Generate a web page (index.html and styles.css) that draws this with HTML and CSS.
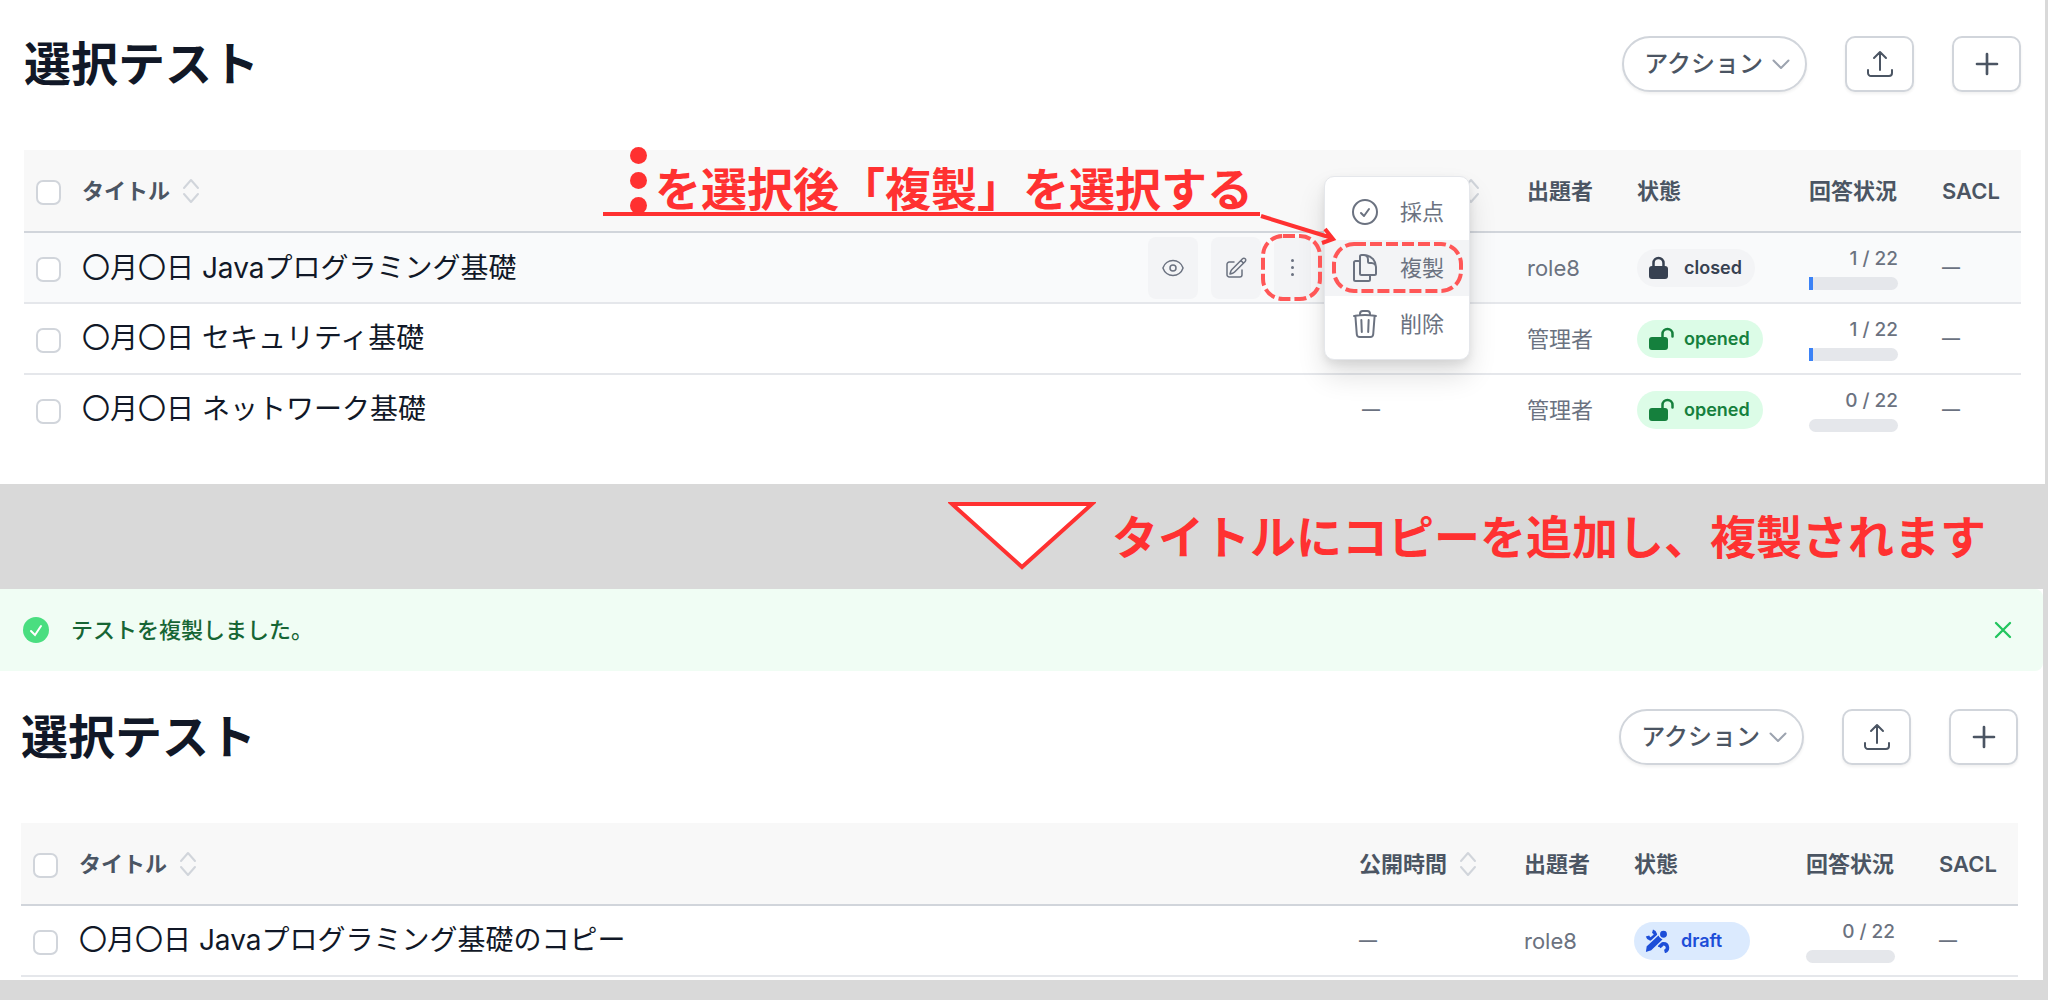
FILE: index.html
```html
<!DOCTYPE html>
<html lang="ja">
<head>
<meta charset="utf-8">
<title>選択テスト</title>
<link rel="stylesheet" href="styles.css">
</head>
<body>
<svg class="sprite" aria-hidden="true">
  <symbol id="chevron" viewBox="0 0 20 20"><path d="M2.500 6.500l7.500 7.500 7.500-7.500"/></symbol>
  <symbol id="upload" viewBox="0 0 24 24"><path d="M3 16.500v2.250A2.250 2.250 0 0 0 5.250 21h13.500A2.250 2.250 0 0 0 21 18.750V16.500m-13.500-9L12 3m0 0 4.500 4.500M12 3v13.500"/></symbol>
  <symbol id="plus" viewBox="0 0 24 24"><path d="M12 4.500v15m7.500-7.500h-15"/></symbol>
  <symbol id="sort" viewBox="0 0 18 26"><path d="M2 10l7-8 7 8M2 16l7 8 7-8"/></symbol>
  <symbol id="eye" viewBox="0 0 24 24"><path d="M2.036 12.322a1.012 1.012 0 0 1 0-.639C3.423 7.510 7.360 4.500 12 4.500c4.638 0 8.573 3.007 9.963 7.178.070.207.070.431 0 .639C20.577 16.490 16.640 19.500 12 19.500c-4.638 0-8.573-3.007-9.963-7.178Z"/><circle cx="12" cy="12" r="3"/></symbol>
  <symbol id="edit" viewBox="0 0 24 24"><path d="m16.862 4.487 1.687-1.688a1.875 1.875 0 1 1 2.652 2.652L10.582 16.070a4.500 4.500 0 0 1-1.897 1.130L6 18l.8-2.685a4.500 4.500 0 0 1 1.130-1.897l8.932-8.931Zm0 0L19.500 7.125M18 14v4.750A2.250 2.250 0 0 1 15.750 21H5.250A2.250 2.250 0 0 1 3 18.750V8.250A2.250 2.250 0 0 1 5.250 6H10"/></symbol>
  <symbol id="check-circle" viewBox="0 0 24 24"><path d="M9 12.750 11.250 15 15 9.750M21 12a9 9 0 1 1-18 0 9 9 0 0 1 18 0Z"/></symbol>
  <symbol id="copy" viewBox="0 0 24 24"><path d="M15.750 17.250v3.375c0 .621-.504 1.125-1.125 1.125h-9.750a1.125 1.125 0 0 1-1.125-1.125V7.875c0-.621.504-1.125 1.125-1.125H6.750a9.060 9.060 0 0 1 1.500.124m7.500 10.376h3.375c.621 0 1.125-.504 1.125-1.125V11.250c0-4.460-3.243-8.161-7.500-8.876a9.060 9.060 0 0 0-1.500-.124H9.375c-.621 0-1.125.504-1.125 1.125v3.500m7.500 10.375H9.375a1.125 1.125 0 0 1-1.125-1.125v-9.250m12 6.625v-1.875a3.375 3.375 0 0 0-3.375-3.375h-1.500a1.125 1.125 0 0 1-1.125-1.125v-1.500a3.375 3.375 0 0 0-3.375-3.375H9.750"/></symbol>
  <symbol id="trash" viewBox="0 0 24 24"><path d="m14.740 9-.346 9m-4.788 0L9.260 9m9.968-3.210c.342.052.682.107 1.022.166m-1.022-.165L18.160 19.673a2.250 2.250 0 0 1-2.244 2.077H8.084a2.250 2.250 0 0 1-2.244-2.077L4.772 5.790m14.456 0a48.108 48.108 0 0 0-3.478-.397m-12 .562c.340-.059.680-.114 1.022-.165m0 0a48.110 48.110 0 0 1 3.478-.397m7.500 0v-.916c0-1.180-.910-2.164-2.090-2.201a51.964 51.964 0 0 0-3.320 0c-1.180.037-2.090 1.022-2.090 2.201v.916m7.500 0a48.667 48.667 0 0 0-7.500 0"/></symbol>
  <symbol id="lock" viewBox="0 0 26 24"><rect x="1" y="10" width="19" height="13" rx="3" fill="currentColor" stroke="none"/><path d="M5.500 12V7a5 5 0 0 1 10 0v5"/></symbol>
  <symbol id="unlock" viewBox="0 0 26 24"><rect x="1" y="10" width="19" height="13" rx="3" fill="currentColor" stroke="none"/><path d="M14.500 12V7a5 5 0 0 1 10 0v2.500"/></symbol>
  <symbol id="tools" viewBox="0 0 26 24"><g fill="none" stroke-linecap="butt"><path d="M7 7L17 18" stroke-width="4"/><path d="M7.500 2.200A4 4 0 1 1 2.500 7M14.500 18a4 4 0 1 1 5 4.500" stroke-width="3.500"/></g><g stroke="#dbeafe" stroke-width="1.500" fill="currentColor"><path d="M0 24l1-7L13.500 5.500l5 5L6.500 22Z"/><circle cx="18.500" cy="5.200" r="4.200"/></g></symbol>
  <symbol id="close" viewBox="0 0 24 24"><path d="M6 18 18 6M6 6l12 12"/></symbol>
</svg>

<section class="panel panel-before">
  <header class="page-head">
    <h1>選択テスト</h1>
    <div class="tools">
      <button class="btn btn-pill" type="button">アクション<svg class="icon chevron"><use href="#chevron"/></svg></button>
      <button class="btn btn-icon" type="button" aria-label="アップロード"><svg class="icon icon-lg"><use href="#upload"/></svg></button>
      <button class="btn btn-icon" type="button" aria-label="追加"><svg class="icon icon-lg bold"><use href="#plus"/></svg></button>
    </div>
  </header>

  <table class="tests">
    <colgroup><col class="c-check"><col><col class="c-time"><col class="c-author"><col class="c-state"><col class="c-answers"><col class="c-sacl"></colgroup>
    <thead>
      <tr>
        <th><input type="checkbox" aria-label="すべて選択"></th>
        <th><span class="sortable">タイトル<svg class="icon sort"><use href="#sort"/></svg></span></th>
        <th><span class="sortable"><span class="covered">公開時間</span><svg class="icon sort"><use href="#sort"/></svg></span></th>
        <th>出題者</th>
        <th>状態</th>
        <th>回答状況</th>
        <th>SACL</th>
      </tr>
    </thead>
    <tbody>
      <tr class="hovered">
        <td><input type="checkbox" aria-label="Javaプログラミング基礎を選択"></td>
        <td>
          <div class="title-cell">
            <a class="title" href="#">〇月〇日 Javaプログラミング基礎</a>
            <div class="actions">
              <button class="action" type="button" aria-label="表示"><svg class="icon"><use href="#eye"/></svg></button>
              <button class="action" type="button" aria-label="編集"><svg class="icon"><use href="#edit"/></svg></button>
              <button class="action action-more" type="button" aria-label="その他"><i></i><i></i><i></i></button>
              <div class="menu">
                <button type="button"><svg class="icon icon-lg"><use href="#check-circle"/></svg>採点</button>
                <button class="active" type="button"><svg class="icon icon-lg"><use href="#copy"/></svg>複製</button>
                <button type="button"><svg class="icon icon-lg"><use href="#trash"/></svg>削除</button>
              </div>
              <svg class="marks" viewBox="0 0 210 90" aria-hidden="true">
                <rect x="8" y="25" width="57" height="63" rx="20"/>
                <rect x="79" y="33" width="127" height="47" rx="20"/>
                <path d="M6 5L77 27M70 18L78 28L67 32"/>
              </svg>
            </div>
          </div>
        </td>
        <td></td>
        <td>role8</td>
        <td><span class="badge closed"><svg class="icon"><use href="#lock"/></svg>closed</span></td>
        <td><div class="answers">1 / 22<span class="bar"><span style="width:4%"></span></span></div></td>
        <td class="none">—</td>
      </tr>
      <tr>
        <td><input type="checkbox" aria-label="セキュリティ基礎を選択"></td>
        <td><a class="title" href="#">〇月〇日 セキュリティ基礎</a></td>
        <td></td>
        <td>管理者</td>
        <td><span class="badge opened"><svg class="icon"><use href="#unlock"/></svg>opened</span></td>
        <td><div class="answers">1 / 22<span class="bar"><span style="width:4%"></span></span></div></td>
        <td class="none">—</td>
      </tr>
      <tr>
        <td><input type="checkbox" aria-label="ネットワーク基礎を選択"></td>
        <td><a class="title" href="#">〇月〇日 ネットワーク基礎</a></td>
        <td class="none">—</td>
        <td>管理者</td>
        <td><span class="badge opened"><svg class="icon"><use href="#unlock"/></svg>opened</span></td>
        <td><div class="answers">0 / 22<span class="bar"></span></div></td>
        <td class="none">—</td>
      </tr>
    </tbody>
  </table>

  <p class="callout"><span class="dots"><i></i><i></i><i></i></span>を選択後「複製」を選択する</p>
</section>

<div class="step">
  <svg class="triangle" viewBox="0 0 148 70" aria-hidden="true"><path d="M4 2H144L74 65Z"/></svg>
  <p>タイトルにコピーを追加し、複製されます</p>
</div>

<section class="panel panel-after">
  <div class="alert" role="status">
    <svg class="done" viewBox="0 0 26 26" aria-hidden="true"><circle cx="13" cy="13" r="13"/><path d="M8 14l4 4 6-9"/></svg>
    <p>テストを複製しました。</p>
    <button type="button" aria-label="閉じる"><svg class="icon"><use href="#close"/></svg></button>
  </div>
  <header class="page-head">
    <h1>選択テスト</h1>
    <div class="tools">
      <button class="btn btn-pill" type="button">アクション<svg class="icon chevron"><use href="#chevron"/></svg></button>
      <button class="btn btn-icon" type="button" aria-label="アップロード"><svg class="icon icon-lg"><use href="#upload"/></svg></button>
      <button class="btn btn-icon" type="button" aria-label="追加"><svg class="icon icon-lg bold"><use href="#plus"/></svg></button>
    </div>
  </header>
  <table class="tests">
    <colgroup><col class="c-check"><col><col class="c-time"><col class="c-author"><col class="c-state"><col class="c-answers"><col class="c-sacl"></colgroup>
    <thead>
      <tr>
        <th><input type="checkbox" aria-label="すべて選択"></th>
        <th><span class="sortable">タイトル<svg class="icon sort"><use href="#sort"/></svg></span></th>
        <th><span class="sortable">公開時間<svg class="icon sort"><use href="#sort"/></svg></span></th>
        <th>出題者</th>
        <th>状態</th>
        <th>回答状況</th>
        <th>SACL</th>
      </tr>
    </thead>
    <tbody>
      <tr>
        <td><input type="checkbox" aria-label="Javaプログラミング基礎のコピーを選択"></td>
        <td><a class="title" href="#">〇月〇日 Javaプログラミング基礎のコピー</a></td>
        <td class="none">—</td>
        <td>role8</td>
        <td><span class="badge draft"><svg class="icon"><use href="#tools"/></svg>draft</span></td>
        <td><div class="answers">0 / 22<span class="bar"></span></div></td>
        <td class="none">—</td>
      </tr>
    </tbody>
  </table>
</section>
</body>
</html>
```
FILE: styles.css
```css
* { box-sizing: border-box; }

body {
  margin: 0;
  background: #d9d9d9;
  color: #6b7280;
  font-family: Inter, "Noto Sans CJK JP", sans-serif;
  font-size: 22px;
  line-height: 32px;
}

h1, p { margin: 0; }
button { font: inherit; color: inherit; cursor: pointer; }
.sprite { display: none; }

.icon {
  flex: none;
  width: 24px;
  height: 24px;
  fill: none;
  stroke: currentColor;
  stroke-width: 1.5;
  stroke-linecap: round;
  stroke-linejoin: round;
}
.icon-lg { width: 32px; height: 32px; }
.bold { stroke-width: 2; }

.panel { position: relative; background: #fff; }
.panel-before { margin-right: 3px; padding: 36px 24px 38px; }
.panel-after { margin-right: 5px; padding-bottom: 3px; }
.panel-after .page-head { padding: 38px 25px 0 21px; }
.panel-after .tests { width: calc(100% - 46px); margin-left: 21px; }

.page-head {
  display: flex;
  align-items: center;
  justify-content: space-between;
  margin-bottom: 58px;
}
h1 { color: #111827; font-size: 47px; line-height: 56px; font-weight: 700; }
.tools { display: flex; gap: 38px; }
.btn {
  display: flex;
  align-items: center;
  justify-content: center;
  height: 56px;
  padding: 0;
  border: 2px solid #d1d5db;
  border-radius: 10px;
  background: #fff;
  color: #4b5563;
  box-shadow: 0 2px 3px rgba(0, 0, 0, 0.06);
}
.btn-icon { width: 69px; }
.btn-pill { gap: 8px; padding: 0 14px 0 20px; border-radius: 28px; font-size: 24px; font-weight: 500; }
.chevron { width: 20px; height: 20px; color: #9ca3af; stroke-width: 2; }

.tests { width: 100%; table-layout: fixed; border-collapse: separate; border-spacing: 0; }
.c-check { width: 58px; }
.c-time { width: 165px; }
.c-author { width: 110px; }
.c-state { width: 172px; }
.c-answers { width: 133px; }
.c-sacl { width: 79px; }
th {
  height: 83px;
  padding: 0;
  border-bottom: 2px solid #d1d5db;
  background: #f8f8f8;
  color: #4b5563;
  font-weight: 700;
  text-align: left;
  white-space: nowrap;
}
th:last-child { font-weight: 600; }
td { height: 71px; padding: 0; border-bottom: 2px solid #e5e7eb; white-space: nowrap; }
.panel-before tr:last-child td { border-bottom-color: transparent; }
.hovered td { background: #f9fafb; }
.none { font-size: 18px; font-weight: 500; }
.sortable { display: flex; align-items: center; gap: 12px; }
.sort { width: 18px; height: 26px; color: #d1d5db; stroke-width: 2; }
.covered { visibility: hidden; }

input[type="checkbox"] {
  display: block;
  appearance: none;
  width: 25px;
  height: 25px;
  margin: 4px 0 0 12px;
  border: 2px solid #d1d5db;
  border-radius: 7px;
  background: #fff;
}

.title { color: #111827; font-size: 28px; text-decoration: none; }
.title-cell { display: flex; align-items: center; justify-content: space-between; padding-right: 51px; }
.actions { position: relative; display: flex; gap: 13px; }
.action {
  display: flex;
  align-items: center;
  justify-content: center;
  width: 50px;
  height: 62px;
  padding: 0;
  border: 0;
  border-radius: 8px;
  background: #f3f4f6;
}
.action-more { flex-direction: column; gap: 4px; width: 37px; }
.action-more i { width: 3px; height: 3px; border-radius: 50%; background: #6b7280; }

.menu {
  position: absolute;
  z-index: 1;
  top: -61px;
  left: calc(100% + 13px);
  width: 146px;
  padding: 7px 0;
  border: 1px solid #e5e7eb;
  border-radius: 10px;
  background: #fff;
  box-shadow: 0 16px 28px rgba(0, 0, 0, 0.12), 0 4px 8px rgba(0, 0, 0, 0.08);
}
.menu button {
  display: flex;
  align-items: center;
  gap: 19px;
  width: 100%;
  height: 56px;
  padding: 0 0 0 24px;
  border: 0;
  background: transparent;
}
.menu .active { background: #f3f4f6; }

.marks {
  position: absolute;
  z-index: 2;
  top: -26px;
  left: calc(100% - 56px);
  width: 210px;
  height: 90px;
  fill: none;
  stroke: #ff3131;
  stroke-width: 4;
  pointer-events: none;
}
.marks rect { stroke: #ff5757; stroke-dasharray: 12 4; }

.badge {
  display: inline-flex;
  align-items: center;
  gap: 10px;
  height: 38px;
  padding: 0 13px 0 11px;
  border-radius: 19px;
  font-size: 18px;
  font-weight: 600;
  vertical-align: middle;
}
.badge .icon { width: 26px; stroke-width: 2.5; }
.closed { background: #f3f4f6; color: #374151; }
.opened { background: #dcfce7; color: #15803d; }
.draft { min-width: 116px; background: #dbeafe; color: #1d4ed8; }

.answers { width: 89px; padding-top: 2px; font-size: 19px; line-height: 24px; font-weight: 500; text-align: right; }
.bar { display: block; height: 13px; margin-top: 6px; border-radius: 7px; background: #e5e7eb; }
.bar span { display: block; height: 100%; background: #3b82f6; }

.callout {
  position: absolute;
  top: 148px;
  right: 785px;
  display: flex;
  align-items: flex-end;
  gap: 8px;
  height: 68px;
  padding: 0 7px 0 27px;
  border-bottom: 4px solid #ff3131;
  color: #ff3131;
  font-size: 46px;
  line-height: 46px;
  font-weight: 700;
  white-space: nowrap;
}
.dots { display: flex; flex-direction: column; gap: 8px; margin-bottom: -2px; }
.dots i { width: 17px; height: 17px; border-radius: 50%; background: #ff3131; }

.step {
  display: flex;
  align-items: center;
  justify-content: flex-end;
  gap: 16px;
  height: 105px;
  padding-right: 62px;
  color: #ff3131;
  font-size: 46px;
  line-height: 56px;
  font-weight: 700;
}
.triangle { width: 148px; height: 70px; fill: #fff; stroke: #ff3131; stroke-width: 4; }

.alert {
  display: flex;
  align-items: center;
  gap: 22px;
  height: 82px;
  padding: 0 26px 0 23px;
  border-radius: 0 8px 8px 0;
  background: #f0fdf4;
  color: #166534;
  font-weight: 500;
}
.done { width: 26px; height: 26px; fill: #4ade80; }
.done path { fill: none; stroke: #fff; stroke-width: 2; stroke-linecap: round; }
.alert button { display: flex; margin-left: auto; padding: 0; border: 0; background: transparent; color: #22c55e; }
.alert button .icon { width: 28px; height: 28px; stroke-width: 2; }
```
